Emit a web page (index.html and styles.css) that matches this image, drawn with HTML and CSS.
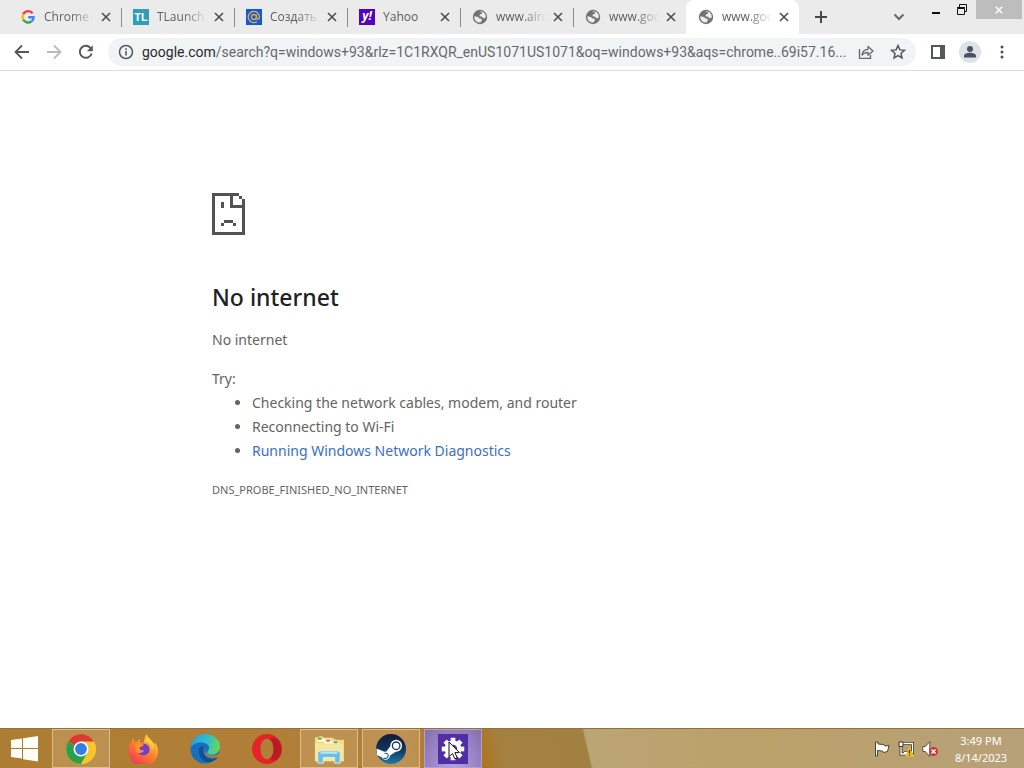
FILE: index.html
```html
<!DOCTYPE html>
<html lang="en">
<head>
<meta charset="utf-8">
<title>No internet</title>
<link rel="stylesheet" href="styles.css">
</head>
<body>
<svg class="defs" aria-hidden="true">
  <symbol id="x" viewBox="0 0 10 10"><path d="M1 1l8 8M9 1L1 9" fill="none" stroke="currentColor" stroke-width="1.600"/></symbol>
  <symbol id="globe" viewBox="0 0 16 16"><circle cx="8" cy="8" r="7.200" fill="#6f7377"/><path d="M2.300 7.300l3.700 .8 1.600 1.500 1.800.2.600 1.200-1.400 2.600C4.500 13.800 2 11 2.300 7.300zM7.300 2.400c4-.6 7 2.600 6.500 6.200l-2.300.8-1.400-1.600-2.600-.5.300-1.800 2-.7.400-1.300z" fill="#ececec"/></symbol>
</svg>
<header class="browser">
  <div class="tabstrip">
    <nav class="tabs" aria-label="Tabs">
      <div class="tab">
        <svg class="fav" viewBox="0 0 16 16" fill="none" stroke-width="2.400"><path d="M12.600 4.200A5.600 5.600 0 0 0 3.200 5.300" stroke="#ea4335"/><path d="M3.200 5.300a5.600 5.600 0 0 0 0 5.400" stroke="#fbbc05"/><path d="M3.200 10.700a5.600 5.600 0 0 0 8.400 1.600" stroke="#34a853"/><path d="M11.600 12.300c1.300-1 2-2.500 2-4.100H8.200" stroke="#4285f4"/></svg>
        <a class="title" href="#">Chrome</a><button class="close" aria-label="Close tab"><svg><use href="#x"/></svg></button>
      </div>
      <div class="tab">
        <span class="fav tl">TL</span>
        <a class="title" href="#">TLaunch</a><button class="close" aria-label="Close tab"><svg><use href="#x"/></svg></button>
      </div>
      <div class="tab">
        <span class="fav at"><svg viewBox="0 0 16 16" fill="none" stroke="#e9a540" stroke-width="1.400"><circle cx="8" cy="8" r="2.500"/><path d="M10.500 5.500v3.300c0 2.200 3 2 3-.8A5.600 5.600 0 1 0 11 12.700"/></svg></span>
        <a class="title" href="#">Создать</a><button class="close" aria-label="Close tab"><svg><use href="#x"/></svg></button>
      </div>
      <div class="tab">
        <span class="fav yahoo">y!</span>
        <a class="title" href="#">Yahoo</a><button class="close" aria-label="Close tab"><svg><use href="#x"/></svg></button>
      </div>
      <div class="tab">
        <svg class="fav"><use href="#globe"/></svg>
        <a class="title" href="#">www.aird</a><button class="close" aria-label="Close tab"><svg><use href="#x"/></svg></button>
      </div>
      <div class="tab">
        <svg class="fav"><use href="#globe"/></svg>
        <a class="title" href="#">www.goo</a><button class="close" aria-label="Close tab"><svg><use href="#x"/></svg></button>
      </div>
      <div class="tab active">
        <svg class="fav"><use href="#globe"/></svg>
        <a class="title" href="#">www.goo</a><button class="close" aria-label="Close tab"><svg><use href="#x"/></svg></button>
      </div>
    </nav>
    <button class="strip-btn" aria-label="New tab"><svg width="14" height="14" viewBox="0 0 14 14"><path d="M7 1v12M1 7h12" stroke="#46494c" stroke-width="2"/></svg></button>
    <div class="window">
      <button class="strip-btn" aria-label="Search tabs"><svg width="12" height="8" viewBox="0 0 12 8"><path d="M1.500 1.500L6 6l4.500-4.500" fill="none" stroke="#66696c" stroke-width="2"/></svg></button>
      <button class="caption" aria-label="Minimize"><svg width="8" height="16" viewBox="0 0 8 16"><path d="M0 11h8" stroke="#111" stroke-width="2"/></svg></button>
      <button class="caption" aria-label="Restore"><svg width="10" height="16" viewBox="0 0 10 16" fill="none" stroke="#111"><path d="M.5 6.500h7v6h-7zM0 5.500h8M2.500 5V2.500h7v7H8"/></svg></button>
      <button class="caption quit" aria-label="Close"><svg width="8" height="8" viewBox="0 0 8 8"><path d="M.7.7l6.600 6.600M7.300.7L.7 7.300" stroke="#fff" stroke-width="1.500"/></svg></button>
    </div>
  </div>
  <div class="toolbar">
    <div class="tools">
      <button class="tool" aria-label="Back"><svg width="16" height="16" viewBox="0 0 16 16"><path d="M15 8H2M8 1.500L1.500 8 8 14.500" fill="none" stroke="#55595d" stroke-width="1.800"/></svg></button>
      <button class="tool" aria-label="Forward"><svg width="16" height="16" viewBox="0 0 16 16"><path d="M1 8h13M8 1.500L14.500 8 8 14.500" fill="none" stroke="#b9bbbd" stroke-width="1.800"/></svg></button>
      <button class="tool" aria-label="Reload"><svg width="16" height="16" viewBox="0 0 16 16"><path d="M13.600 9.500A6 6 0 1 1 12.300 3.800L13 4.500" fill="none" stroke="#55595d" stroke-width="2"/><path d="M14.800 1.200v6H8.800z" fill="#55595d"/></svg></button>
    </div>
    <div class="omnibox">
      <button class="info" aria-label="Site information"><svg width="16" height="16" viewBox="0 0 16 16"><circle cx="8" cy="8" r="6.500" fill="none" stroke="#54585c" stroke-width="1.500"/><path d="M8 7v4.500M8 4.300v1.700" stroke="#54585c" stroke-width="1.600"/></svg></button>
      <label for="url">google.com</label><input id="url" type="text" value="/search?q=windows+93&amp;rlz=1C1RXQR_enUS1071US1071&amp;oq=windows+93&amp;aqs=chrome..69i57.16...">
      <button class="tool" aria-label="Share"><svg width="16" height="16" viewBox="0 0 16 16" fill="none" stroke="#65696d" stroke-width="1.300"><path d="M1.500 5v9.300h11V11"/><path d="M4 11c.3-4 2.700-5.500 6-5.700V2.500L15 7l-5 4.300V8.500C7.500 8.400 5.500 9 4 11z" stroke-linejoin="round"/></svg></button>
      <button class="tool" aria-label="Bookmark"><svg width="16" height="16" viewBox="0 0 16 16"><path d="M8 1.600l1.900 4.300 4.600.4-3.500 3.100 1 4.600L8 11.600 4 14l1-4.600L1.500 6.300l4.600-.4z" fill="none" stroke="#54585c" stroke-width="1.500"/></svg></button>
    </div>
    <div class="tools">
      <button class="tool" aria-label="Side panel"><svg width="14" height="14" viewBox="0 0 14 14"><path d="M1 1h12v12H1z" fill="none" stroke="#55595d" stroke-width="2"/><path d="M9 1h4v12H9z" fill="#55595d"/></svg></button>
      <button class="tool" aria-label="Profile"><svg width="22" height="22" viewBox="0 0 22 22"><circle cx="11" cy="11" r="11" fill="#dde1e8"/><circle cx="11" cy="8" r="3" fill="#4b5261"/><path d="M5 16.500V15c0-2 3-3.200 6-3.200s6 1.200 6 3.200v1.500z" fill="#4b5261"/></svg></button>
      <button class="tool" aria-label="Menu"><svg width="4" height="14" viewBox="0 0 4 14" fill="#4b4f53"><circle cx="2" cy="2" r="1.500"/><circle cx="2" cy="7" r="1.500"/><circle cx="2" cy="12" r="1.500"/></svg></button>
    </div>
  </div>
</header>
<main class="page">
  <div class="error">
    <svg class="sad" viewBox="0 0 11 14" fill="#535353" shape-rendering="crispEdges"><path d="M0 0h9v1h1v1h1v12H0zM1 1v12h9V5H6V1zM7 1v3h3V2H9V1z" fill-rule="evenodd"/><path d="M3 3h1v2H3zM4 9h3v1H4zM3 10h1v1H3zM7 10h1v1H7z"/></svg>
    <h1>No internet</h1>
    <p>No internet</p>
    <p class="try">Try:</p>
    <ul>
      <li>Checking the network cables, modem, and router</li>
      <li>Reconnecting to Wi-Fi</li>
      <li><a href="#">Running Windows Network Diagnostics</a></li>
    </ul>
    <p class="code">DNS_PROBE_FINISHED_NO_INTERNET</p>
  </div>
</main>
<footer class="taskbar">
  <button class="start" aria-label="Start"><svg width="28" height="26" viewBox="0 0 28 26" fill="#fffdf5"><path d="M0 4l11-1.600V12H0zM12 2.200L27 0v12H12zM0 13h11v9.600L0 21zM12 13h15v12.500l-15-2.200z"/></svg></button>
  <div class="apps">
    <button class="app open" aria-label="Chrome"><svg viewBox="0 0 32 32"><circle cx="16" cy="16" r="16" fill="#f8c62c"/><path d="M16 16L2.150 8A16 16 0 0 1 29.850 8z" fill="#db3c31"/><path d="M2.150 8A16 16 0 0 0 16 32l7-12-7-4z" fill="#2c9f4b"/><path d="M16 8h13.850A16 16 0 0 1 16 32l7-12z" fill="#f8c62c"/><circle cx="16" cy="16" r="8" fill="#fff"/><circle cx="16" cy="16" r="6.300" fill="#347fe6"/></svg></button>
    <button class="app" aria-label="Firefox"><svg viewBox="0 0 32 32"><defs><linearGradient id="ff" x1=".9" y1="0" x2=".2" y2="1"><stop offset="0" stop-color="#ffe648"/><stop offset=".45" stop-color="#ff8a28"/><stop offset="1" stop-color="#ef3157"/></linearGradient></defs><path d="M5 4l2 4 2 1 3-4 1 4h4c0-4 1-6 3-9 1 4 5 6 7 9l1 2 1-2c4 6 4 12 1 17a15.500 15.500 0 0 1-28-1C-1 16 1 11 4 8z" fill="url(#ff)"/><circle cx="16.500" cy="16.500" r="6.500" fill="#7440c7"/><path d="M8 10c4-1 7 0 9 2l-4 2c-2 2 1 4 4 3 0 3-6 5-9 1z" fill="#ff922b"/><path d="M17 8c6 0 9 4 8 10 4-5 2-10-4-14z" fill="#ffd43c"/></svg></button>
    <button class="app" aria-label="Edge"><svg viewBox="0 0 32 32"><defs><linearGradient id="eg" x1="0" y1=".3" x2="1" y2=".5"><stop offset="0" stop-color="#2a9ede"/><stop offset=".55" stop-color="#32bfcb"/><stop offset="1" stop-color="#68d850"/></linearGradient></defs><circle cx="16" cy="16" r="15.500" fill="#176fc0"/><path d="M1 14C2 5 8 0 16 0c9 0 16 6 16 13 0 6-4 9-9 9-4 0-6-2-4-4 4-5-1-9-7-9-5 0-9 2-11 5z" fill="url(#eg)"/><path d="M10 15c-2 7 2 14 9 15 4 0 8-2 11-5-10 5-17-1-16-9l1-3c-2 0-4 0-5 2z" fill="#114f91"/><path d="M18 14c-4 4 0 9 6 9 3 0 6-1 8-4v5l-2 1c-1-1-4 1-8 0-7-1-8-7-4-11z" fill="#b27e37"/></svg></button>
    <button class="app" aria-label="Opera"><svg viewBox="0 0 32 32"><path d="M16 0a16 16 0 1 0 0 32 16 16 0 0 0 0-32zm0 5c4 0 7 5 7 11s-3 11-7 11-7-5-7-11 3-11 7-11z" fill="#e52427" fill-rule="evenodd"/><path d="M19 5.800C21 4 24 3.500 27 5c6 6 6 16 0 22-3 1.500-6 1-8-.8 3-2 4-6 4-10.200s-1-8.200-4-10.200z" fill="#b81c22"/></svg></button>
    <button class="app open" aria-label="File Explorer"><svg viewBox="0 0 32 32"><path d="M1 4l7-2 3 2h9l3 2h9v23H1z" fill="#f4dc7a"/><path d="M3 5h15v3H3zM11 8h15v3H11z" fill="#fff9e4"/><path d="M4 4h4v2H4z" fill="#43a85a"/><path d="M13 6h4v2h-4z" fill="#d75944"/><path d="M21 8h4v2h-4z" fill="#3b91cf"/><path d="M1 10h30v19H1z" fill="#f6e59c"/><path d="M4 31V20q0-2 3-2h18q3 0 3 2v11h-6v-6H10v6z" fill="#71bddd" stroke="#d6f2f7"/><path d="M7 20h18" stroke="#b9e7f3" stroke-width="2"/></svg></button>
    <button class="app open" aria-label="Steam"><svg viewBox="0 0 32 32"><defs><linearGradient id="st" x1="0" y1="0" x2="0" y2="1"><stop offset="0" stop-color="#111d35"/><stop offset=".5" stop-color="#12335c"/><stop offset="1" stop-color="#187ca9"/></linearGradient></defs><circle cx="16" cy="16" r="16" fill="url(#st)"/><path d="M.5 15.500l8.500 3.500 2-.3 4.500-6 6 6L15 23c-.3 5-6.500 6-8.500 2L1 22.500z" fill="#fff"/><circle cx="21.500" cy="12.500" r="6.300" fill="#fff"/><circle cx="21.500" cy="12.500" r="4" fill="none" stroke="#17345a" stroke-width="1.400"/><path d="M8 25.500c2 1.200 5 .5 5-2.500 0-2-2-3-4-2.200" fill="none" stroke="#17628a" stroke-width="1.200"/></svg></button>
    <button class="app open hot" aria-label="Settings"><svg viewBox="0 0 32 32"><path d="M0 0h32v32H0z" fill="#512da8"/><g transform="translate(16 16)" fill="#fff"><path id="tooth" d="M-2.500-12h5v24h-5z"/><use href="#tooth" transform="rotate(45)"/><use href="#tooth" transform="rotate(90)"/><use href="#tooth" transform="rotate(135)"/><circle r="9"/><circle r="4.500" fill="#512da8"/></g></svg>
      <svg class="cursor" viewBox="0 0 12 19"><path d="M1 1v14.500l3.500-3 2.300 5.300 2.400-1-2.300-5.200h4.500z" fill="#fff" stroke="#111"/></svg></button>
  </div>
  <div class="tray">
    <button class="tray-btn" aria-label="Action Center"><svg width="16" height="16" viewBox="0 0 16 16"><path d="M1.500 1v14h2V9.500l5 .5 1 1.500 4-1 1.500-6-4 .5-1-1.500-6-.5V1z" fill="#fff" stroke="#514329"/></svg></button>
    <button class="tray-btn" aria-label="Network"><svg width="16" height="16" viewBox="0 0 16 16"><path d="M5 2.500h9.500v9H6M3 5v8h6" fill="none" stroke="#43351e" stroke-width="3"/><path d="M5 2.500h9.500v9H6M3 5v8h6" fill="none" stroke="#fff" stroke-width="1.300"/><path d="M1 1h4v4.500H1z" fill="#fff" stroke="#43351e"/><path d="M11.500 6l4.500 9.500H7z" fill="#f5bd23"/><path d="M11.500 9v3.500M11.500 13.500v1" stroke="#442f0d" stroke-width="1.300"/></svg></button>
    <button class="tray-btn" aria-label="Volume muted"><svg width="16" height="16" viewBox="0 0 16 16"><path d="M.8 5.500h2.500l4.500-5v15l-4.500-5H.8z" fill="#fff" stroke="#62533a"/><circle cx="11.500" cy="10.500" r="4.500" fill="#d33236"/><path d="M9.500 8.500l4 4M13.500 8.500l-4 4" stroke="#fff" stroke-width="1.500"/></svg></button>
  </div>
  <button class="clock"><span>3:49 PM</span><span>8/14/2023</span></button>
</footer>
</body>
</html>
```

FILE: styles.css
```css
* { box-sizing: border-box; }
html, body { height: 100%; }
body { margin: 0; display: flex; flex-direction: column; min-height: 100vh; background: #fff; color: #5f6368; font-family: "Noto Sans", sans-serif; font-size: 14px; overflow: hidden; }
button { border: 0; padding: 0; margin: 0; background: none; font: inherit; color: inherit; display: flex; align-items: center; justify-content: center; flex: none; }
svg { display: block; flex: none; }
a { color: inherit; text-decoration: none; }
.defs { position: absolute; width: 0; height: 0; }

.tabstrip { display: flex; height: 34px; background: #ebebeb; padding-left: 8px; }
.tabs { display: flex; flex: 0 1 791px; min-width: 0; }
.tab { flex: 1 1 113px; min-width: 0; display: flex; align-items: center; padding: 0 10px 0 12px; position: relative; }
.tab::after { content: ""; position: absolute; right: -1px; top: 8px; width: 1px; height: 19px; background: #8c8c8c; }
.tab:nth-child(6)::after, .tab.active::after { display: none; }
.tab.active { background: #fff; border-radius: 8px 8px 0 0; }
.fav { width: 16px; height: 16px; flex: none; }
.tab > .fav:first-child { margin-right: 8px; }
.tl { background: #2f9fb9; color: #fff; font: bold 11px/16px "Liberation Sans", sans-serif; text-align: center; }
.at { background: #0b5be0; }
.yahoo { background: #5203c4; color: #fff; font: italic bold 12px/14px "Open Sans", sans-serif; text-align: center; }
.title { flex: 1; min-width: 0; overflow: hidden; white-space: nowrap; font-family: "Open Sans", sans-serif; font-size: 12px; line-height: 18px; color: #5c5f63; -webkit-mask-image: linear-gradient(to right, #000 50%, transparent 95%); mask-image: linear-gradient(to right, #000 50%, transparent 95%); }
.tab:nth-child(4) .title { -webkit-mask-image: none; mask-image: none; }
.close { margin-left: 4px; color: #4b4e51; }
.close svg { width: 10px; height: 10px; }
.strip-btn { width: 28px; height: 34px; margin-left: 8px; }
.window { display: flex; margin-left: auto; padding-right: 2px; }
.window .strip-btn { margin-right: 10px; }
.caption { width: 26px; height: 19px; }
.quit { width: 46px; margin-left: 1px; background: #bdbdbd; }

.toolbar { display: flex; align-items: center; gap: 8px; height: 37px; padding: 0 8px; border-bottom: 1px solid #d9dbdd; }
.tools { display: flex; gap: 4px; }
.tool { width: 28px; height: 28px; }
.omnibox { flex: 1; min-width: 0; display: flex; align-items: center; height: 28px; border-radius: 14px; background: #f1f4f5; padding: 0 4px 0 10px; font-family: Roboto, sans-serif; font-size: 14px; }
.info { margin-right: 8px; }
.omnibox label { color: #27292c; }
.omnibox input { flex: 1; min-width: 0; height: 24px; border: 0; padding: 0; background: none; outline: 0; font: inherit; color: #65696e; }
.omnibox .tool + .tool { margin-left: 4px; }

.page { flex: 1; min-height: 0; overflow: hidden; }
.error { max-width: 600px; margin: 0 auto; padding-top: 122px; color: #646464; font-size: 14px; line-height: 24px; }
.sad { width: 33px; height: 42px; margin-bottom: 47px; }
h1 { margin: 0 0 16px; color: #202124; font-size: 23px; line-height: 30px; font-weight: 500; }
p { margin: 0 0 15px; }
.try { margin: 0; }
ul { margin: 0 0 15px; padding-left: 40px; }
li a { color: #3b6fc4; }
.code { margin: 0; font-size: 11px; }

.taskbar { display: flex; align-items: center; height: 40px; flex: none; background: linear-gradient(77deg, #ad7d33 0, #b27f39 40%, #ad7521 47%, #a48140 49%, #a2803f 57.200%, #bba574 57.400%, #baa069 75%, #b7a17a 100%); border-top: 1px solid #8f7145; color: #fff; }
.start { width: 50px; height: 39px; }
.apps { display: flex; gap: 4px; padding-left: 2px; }
.app { width: 58px; height: 39px; border: 1px solid transparent; position: relative; }
.app > svg:first-child { width: 30px; height: 30px; }
.open { background: rgba(214, 180, 130, .35); border-color: rgba(237, 215, 175, .65); }
.hot { background: radial-gradient(ellipse at 50% 100%, #b5a0e8, #8570ad); border-color: #b6a0c5; }
.cursor { position: absolute; left: 23px; top: 11px; width: 12px; height: 19px; }
.tray { display: flex; gap: 8px; margin-left: auto; }
.clock { width: 86px; flex-direction: column; font-size: 11px; line-height: 17px; }
```
